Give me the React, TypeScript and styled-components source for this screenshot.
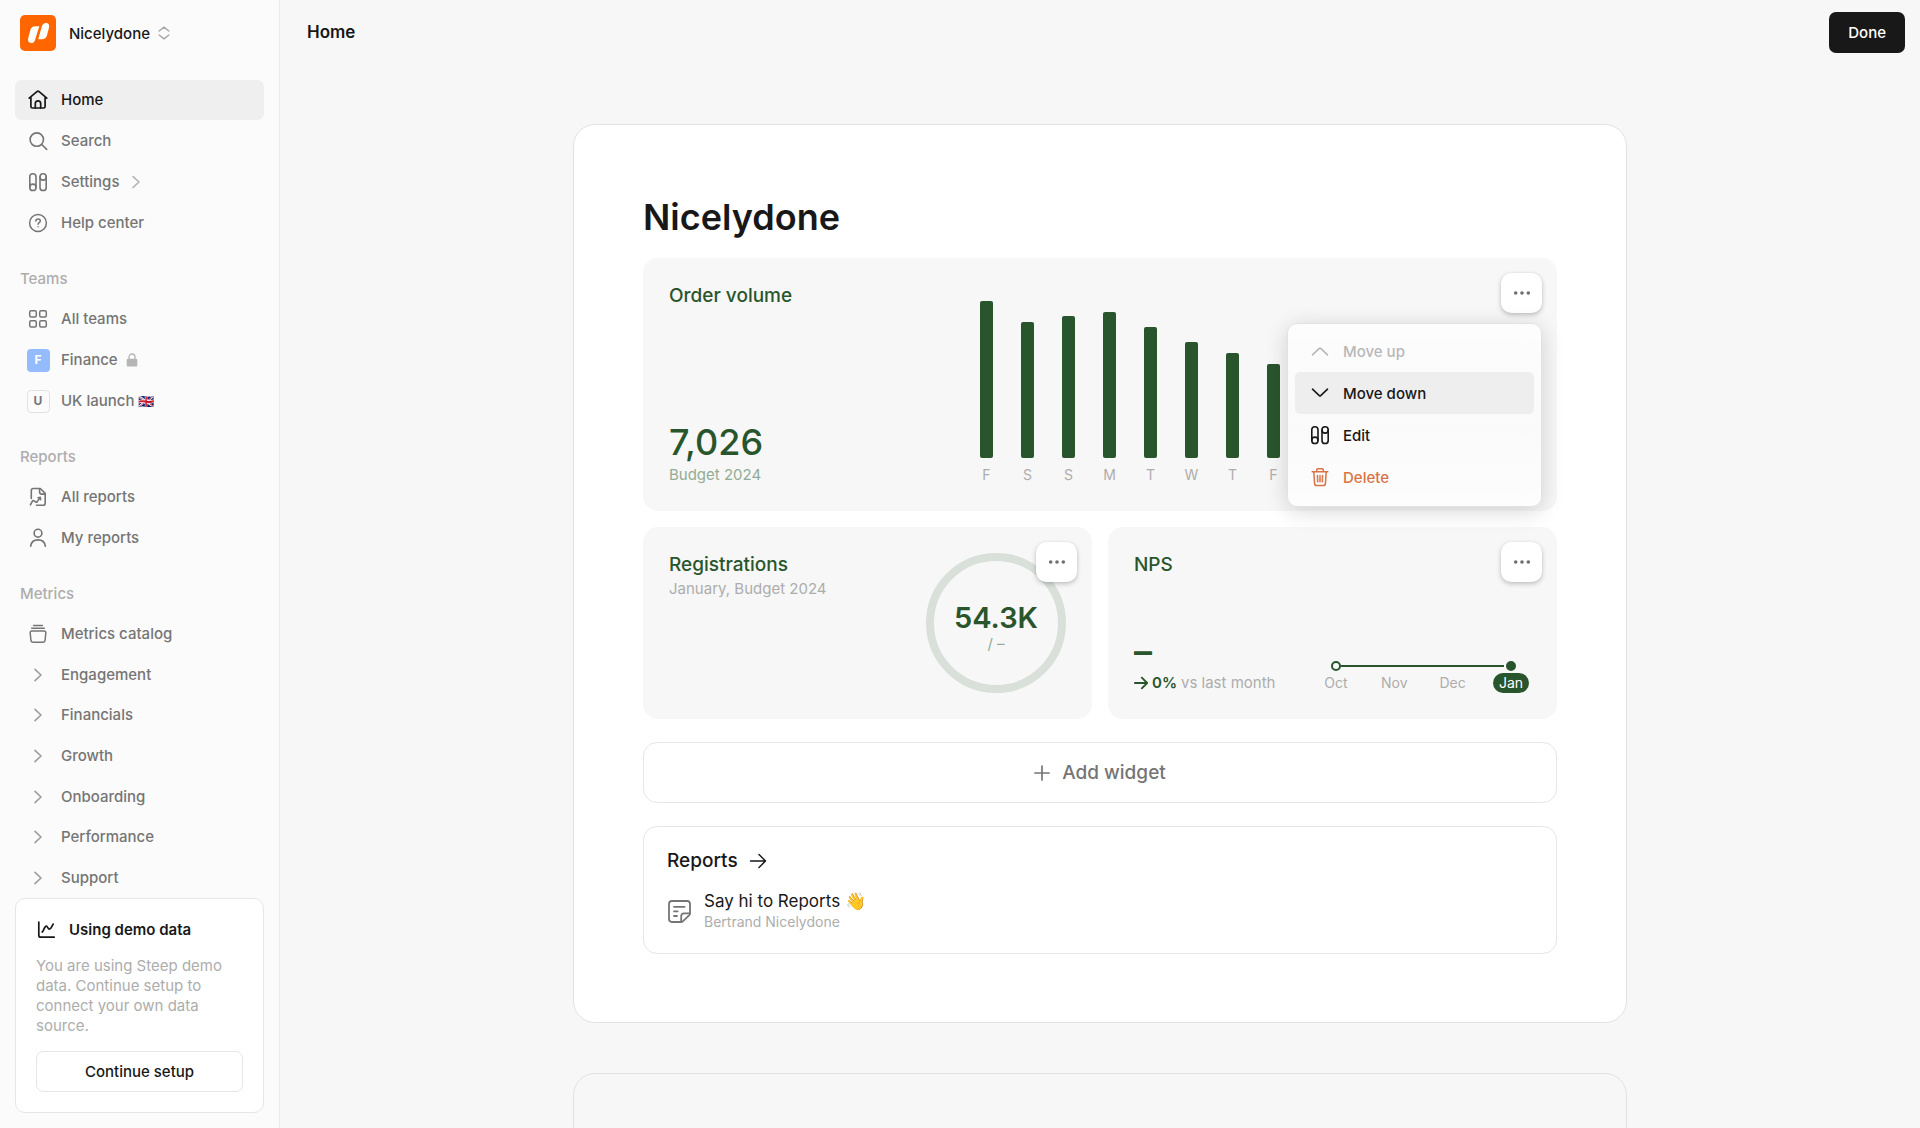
import React from "react";
import styled, { createGlobalStyle, css } from "styled-components";

const color = {
  page: "#f7f7f7",
  side: "#fbfbfb",
  line: "#e6e6e6",
  ink: "#181818",
  body: "#757575",
  mute: "#adadad",
  green: "#29552c",
  softGreen: "#92ac94",
  ring: "#d9e0da",
};

const GlobalStyle = createGlobalStyle`
  *, *::before, *::after { box-sizing: border-box; }
  body { margin: 0; background: ${color.page}; }
  body, button { font-family: Inter, "Liberation Sans", sans-serif; }
  button { cursor: pointer; }
  h1, h2, h3, p, ul { margin: 0; padding: 0; }
  ul { list-style: none; }
  a { color: inherit; text-decoration: none; }
  svg { display: block; flex: none; }
`;

const Shell = styled.div`
  display: grid;
  grid-template-columns: 280px minmax(0, 1fr);
  height: 100vh;
  font-size: 15px;
  line-height: 20px;
  color: ${color.ink};
`;

/* Sidebar */

const Sidebar = styled.aside`
  display: flex;
  flex-direction: column;
  min-height: 0;
  padding: 15px;
  background: ${color.side};
  border-right: 1px solid #ebebeb;
`;

const Workspace = styled.button`
  display: flex;
  align-items: center;
  gap: 13px;
  margin: 0 0 29px 5px;
  padding: 0;
  border: 0;
  background: none;
  color: ${color.ink};
  font-size: 15px;
  font-weight: 500;
`;

const WorkspaceName = styled.span`
  display: flex;
  align-items: center;
  gap: 8px;
`;

const NavScroll = styled.nav`
  display: flex;
  flex-direction: column;
  flex: 1;
  min-height: 0;
  overflow: hidden;
`;

const NavList = styled.ul`
  display: flex;
  flex-direction: column;
  gap: 1px;
  &:last-child {
    flex: 1;
    justify-content: space-between;
    gap: 0;
  }
`;

const NavLink = styled.a<{ $active?: boolean }>`
  display: flex;
  align-items: center;
  gap: 12px;
  height: 40px;
  padding: 0 12px;
  border-radius: 7px;
  font-size: 15px;
  font-weight: ${(p) => (p.$active ? 500 : 450)};
  color: ${(p) => (p.$active ? color.ink : color.body)};
  background: ${(p) => (p.$active ? "#efefef" : "transparent")};
`;

const NavIcon = styled.span<{ $faint?: boolean }>`
  display: flex;
  align-items: center;
  justify-content: center;
  width: 22px;
  color: ${(p) => (p.$faint ? "#9c9c9c" : "inherit")};
`;

const NavText = styled.span`
  display: flex;
  align-items: center;
  gap: 8px;
`;

const Emoji = styled.span`
  font-size: 13px;
`;

const NavHeading = styled.h3`
  padding: 26px 5px 10px;
  font-size: 15px;
  line-height: 20px;
  font-weight: 500;
  color: ${color.mute};
`;

const Badge = styled.span<{ $filled?: boolean }>`
  display: flex;
  align-items: center;
  justify-content: center;
  flex: none;
  width: 23px;
  height: 23px;
  border-radius: 4px;
  font-size: 12px;
  font-weight: 700;
  ${(p) =>
    p.$filled
      ? css`
          background: #94bcfd;
          color: #fff;
        `
      : css`
          border: 1px solid #e2e2e2;
          color: ${color.body};
        `}
`;

const DemoCard = styled.section`
  padding: 20px;
  background: #fff;
  border: 1px solid ${color.line};
  border-radius: 10px;
`;

const DemoTitle = styled.h2`
  display: flex;
  align-items: center;
  gap: 13px;
  line-height: 22px;
  font-size: 15px;
  font-weight: 600;
`;

const DemoText = styled.p`
  margin: 15px 0;
  font-size: 15px;
  color: ${color.mute};
`;

const OutlineButton = styled.button`
  width: 100%;
  height: 41px;
  border: 1px solid ${color.line};
  border-radius: 7px;
  background: #fff;
  color: ${color.ink};
  font-size: 15px;
  font-weight: 500;
`;

/* Main column */

const Main = styled.main`
  min-width: 0;
  overflow-y: auto;
  scrollbar-width: none;
`;

const TopBar = styled.header`
  display: flex;
  align-items: center;
  justify-content: space-between;
  height: 64px;
  padding: 0 15px 0 27px;
`;

const PageName = styled.h2`
  font-size: 17px;
  font-weight: 600;
`;

const DoneButton = styled.button`
  height: 41px;
  padding: 0 19px;
  border: 0;
  border-radius: 7px;
  background: #181818;
  color: #fff;
  font-size: 15px;
  font-weight: 500;
`;

const Content = styled.div`
  display: flex;
  flex-direction: column;
  gap: 50px;
  width: 100%;
  max-width: 1054px;
  margin: 0 auto;
  padding: 60px 0;
`;

const Sheet = styled.section<{ $blank?: boolean }>`
  display: flex;
  flex-direction: column;
  gap: 23px;
  padding: 68px 69px;
  border: 1px solid #e2e2e2;
  border-radius: 22px;
  background: ${(p) => (p.$blank ? "transparent" : "#fff")};
`;

const Title = styled.h1`
  margin-bottom: 17px;
  font-size: 36px;
  line-height: 48px;
  font-weight: 600;
`;

const Widgets = styled.div`
  display: grid;
  grid-template-columns: 1fr 1fr;
  gap: 16px;
`;

const Widget = styled.article<{ $wide?: boolean }>`
  position: relative;
  display: flex;
  justify-content: space-between;
  min-height: ${(p) => (p.$wide ? 253 : 192)}px;
  padding: 26px;
  border-radius: 15px;
  background: ${color.page};
  ${(p) => p.$wide && "grid-column: 1 / -1;"}
`;

const WidgetInfo = styled.div`
  display: flex;
  flex-direction: column;
  justify-content: space-between;
`;

const WidgetTitle = styled.h2`
  margin-bottom: 2px;
  font-size: 19px;
  line-height: 24px;
  font-weight: 500;
  color: ${color.green};
`;

const WidgetNote = styled.p<{ $green?: boolean }>`
  font-size: 15px;
  color: ${(p) => (p.$green ? color.softGreen : color.mute)};
`;

const BigNumber = styled.p`
  font-size: 36px;
  line-height: 46px;
  font-weight: 500;
  color: ${color.green};
`;

const MoreButton = styled.button`
  position: absolute;
  top: 15px;
  right: 15px;
  display: flex;
  align-items: center;
  justify-content: center;
  width: 41px;
  height: 40px;
  padding: 0;
  border: 0;
  border-radius: 10px;
  background: #fff;
  color: #6e6e6e;
  box-shadow: 0 2px 5px rgba(0, 0, 0, 0.22), 0 0 2px rgba(0, 0, 0, 0.08);
`;

const BarChart = styled.div`
  display: grid;
  grid-template-columns: repeat(14, 13px);
  column-gap: 28px;
  align-items: end;
  padding: 10px 5px 0 0;
`;

const BarColumn = styled.div`
  display: flex;
  flex-direction: column;
  align-items: center;
  gap: 7px;
  font-size: 14px;
  color: ${color.mute};
`;

const Bar = styled.div`
  width: 13px;
  border-radius: 2px;
  background: ${color.green};
`;

const Menu = styled.div`
  position: absolute;
  z-index: 2;
  top: 65px;
  right: 15px;
  width: 255px;
  padding: 6px 7px 8px;
  border: 1px solid #e2e2e2;
  border-radius: 10px;
  background: linear-gradient(180deg, #fdfdfd 0%, #f9faf9 55%, #fdfdfd 100%);
  box-shadow: 0 4px 22px rgba(0, 0, 0, 0.16);
`;

const MenuItem = styled.button<{ $tone?: "hover" | "danger" }>`
  display: flex;
  align-items: center;
  gap: 12px;
  width: 100%;
  height: 42px;
  padding: 0 14px;
  border: 0;
  border-radius: 5px;
  background: ${(p) => (p.$tone === "hover" ? "#eeeeee" : "transparent")};
  color: ${(p) => (p.$tone === "danger" ? "#d97345" : color.ink)};
  font-size: 15px;
  font-weight: 450;
  &:disabled {
    color: #b8b8b8;
    cursor: default;
  }
`;

const Ring = styled.div`
  display: flex;
  flex-direction: column;
  align-items: center;
  justify-content: center;
  width: 140px;
  height: 140px;
  padding-top: 9px;
  border: 8px solid ${color.ring};
  border-radius: 50%;
`;

const RingValue = styled.p`
  font-size: 29px;
  line-height: 32px;
  font-weight: 600;
  color: ${color.green};
`;

const NpsValue = styled.p`
  margin-bottom: 4px;
  font-size: 36px;
  line-height: 36px;
  font-weight: 600;
  color: ${color.green};
`;

const Trend = styled.p`
  display: flex;
  align-items: center;
  gap: 4px;
  line-height: 20px;
  color: ${color.mute};
  strong {
    font-weight: 600;
    color: ${color.green};
  }
  svg {
    color: ${color.green};
  }
`;

const Timeline = styled.div`
  display: flex;
  flex-direction: column;
  justify-content: flex-end;
  width: 213px;
  padding-right: 2px;
`;

const Track = styled.div`
  display: flex;
  align-items: center;
  gap: 2px;
  padding: 0 13px 2px;
`;

const Dot = styled.span<{ $open?: boolean }>`
  width: 10px;
  height: 10px;
  border-radius: 50%;
  border: 2px solid ${color.green};
  background: ${(p) => (p.$open ? "#fff" : color.green)};
  margin-right: ${(p) => (p.$open ? "-2px" : 0)};
`;

const TrackLine = styled.span`
  flex: 1;
  height: 2px;
  background: ${color.green};
`;

const Months = styled.div`
  display: flex;
  align-items: center;
  justify-content: space-between;
`;

const Month = styled.span<{ $current?: boolean }>`
  width: 36px;
  border-radius: 10px;
  font-size: 14px;
  line-height: 20px;
  text-align: center;
  color: ${(p) => (p.$current ? "#fff" : color.mute)};
  background: ${(p) => (p.$current ? color.green : "transparent")};
`;

const AddWidget = styled.button`
  display: flex;
  align-items: center;
  justify-content: center;
  gap: 12px;
  height: 61px;
  border: 1px solid ${color.line};
  border-radius: 14px;
  background: #fff;
  color: ${color.body};
  font-size: 19px;
  font-weight: 450;
`;

const ReportsPanel = styled.section`
  padding: 22px 23px 21px;
  border: 1px solid ${color.line};
  border-radius: 14px;
`;

const ReportsTitle = styled.h2`
  font-size: 19px;
  line-height: 24px;
  font-weight: 500;
  a {
    display: inline-flex;
    align-items: center;
    gap: 11px;
  }
`;

const ReportLink = styled.a`
  display: flex;
  align-items: center;
  gap: 12px;
  margin-top: 18px;
  svg {
    color: ${color.body};
  }
`;

const ReportName = styled.p`
  font-size: 17px;
  line-height: 21px;
`;

const ReportAuthor = styled.p`
  font-size: 14px;
  line-height: 20px;
  color: ${color.mute};
`;

/* Icons */

type IconProps = { width?: number; children: React.ReactNode };
const Icon = ({ width = 1.6, children }: IconProps) => (
  <svg
    width="22"
    height="22"
    viewBox="0 0 22 22"
    fill="none"
    stroke="currentColor"
    strokeWidth={width}
    strokeLinecap="round"
    strokeLinejoin="round"
    aria-hidden="true"
  >
    {children}
  </svg>
);

const HomeIcon = () => (
  <Icon width={1.7}>
    <path d="M2.2 9.2 9.9 2.7q1.1-.9 2.2 0l7.7 6.5M3.9 8v9.5q0 1.5 1.5 1.5h11.2q1.5 0 1.5-1.5V8" />
    <path d="M8.3 19v-4.4a2.7 2.7 0 0 1 5.4 0V19" />
  </Icon>
);
const SearchIcon = () => (
  <Icon>
    <circle cx="9.8" cy="9.6" r="6.7" />
    <path d="m14.7 14.5 5 4.9" />
  </Icon>
);
const SlidersIcon = () => (
  <Icon>
    <rect x="2.8" y="2.7" width="6.2" height="16.8" rx="3.1" />
    <path d="M2.8 16.2a3.1 3.1 0 0 1 6.2 0" />
    <rect x="13" y="2.7" width="6.2" height="16.8" rx="3.1" />
    <path d="M13 6a3.1 3.1 0 0 0 6.2 0" />
  </Icon>
);
const HelpIcon = () => (
  <Icon width={1.5}>
    <circle cx="11" cy="11" r="8.4" />
    <path d="M8.8 9.1c.1-1.3 1-2 2.3-2s2.2.8 2.2 1.9c0 1.6-2.2 1.6-2.2 3.2" />
    <path d="M11.1 14.7v.1" />
  </Icon>
);
const GridIcon = () => (
  <Icon width={1.5}>
    <rect x="2.7" y="2.7" width="6.6" height="6.3" rx="1.5" />
    <rect x="12.7" y="2.7" width="6.6" height="6.3" rx="1.5" />
    <rect x="2.7" y="12.8" width="6.6" height="6.3" rx="1.5" />
    <rect x="12.7" y="12.8" width="6.6" height="6.3" rx="1.5" />
  </Icon>
);
const LockIcon = () => (
  <svg width="12" height="14" viewBox="0 0 12 14" aria-hidden="true">
    <path d="M3 6.5V4a3 3 0 0 1 6 0v2.5" fill="none" stroke="#b5b5b5" strokeWidth="1.3" />
    <rect x=".7" y="5.8" width="10.6" height="7.7" rx="1.3" fill="#b5b5b5" />
  </svg>
);
const ReportChartIcon = () => (
  <Icon>
    <path d="M4.3 12.4V4.5q0-2 2-2h7l4.9 4.9v9.8q0 2-2 2H9.5" />
    <path d="M12.6 2.7v3.4q0 2 2 2h3.4" />
    <path d="m3.400 18.800 2-3.600q.7-1.100 1.700-.3l1.400 1q.9.700 1.600-.2l3-4.100M11.100 11.700l2.200-.3.300 2.300" />
  </Icon>
);
const PersonIcon = () => (
  <Icon>
    <circle cx="11" cy="6.2" r="3.9" />
    <path d="M3.7 19.3c.4-4.3 3.2-6.4 7.3-6.4s6.900 2.100 7.300 6.400" />
  </Icon>
);
const CatalogIcon = () => (
  <Icon width={1.5}>
    <path d="M6.600 2.500h8.800M4.700 5.200h12.600" />
    <path d="M5 8h12q2 0 1.800 2l-.7 7q-.2 2.200-2.300 2.200H6.200Q4.100 19.200 3.900 17l-.7-7Q3 8 5 8Z" />
  </Icon>
);
const ChevronRight = () => (
  <Icon>
    <path d="m8 5.300 6 5.700-6 5.700" />
  </Icon>
);
const ChevronSmall = () => (
  <svg width="18" height="14" viewBox="0 0 18 14" fill="none" stroke="#b0b0b0" strokeWidth="1.600" strokeLinecap="round" strokeLinejoin="round" aria-hidden="true">
    <path d="m6 1.500 6 5.500-6 5.500" />
  </svg>
);
const UpDownIcon = () => (
  <svg width="12" height="14" viewBox="0 0 12 14" fill="none" stroke="#a8a8a8" strokeWidth="1.500" strokeLinecap="round" strokeLinejoin="round" aria-hidden="true">
    <path d="M1.200 5 6 1.200 10.800 5M1.200 9 6 12.800 10.800 9" />
  </svg>
);
const LineChartIcon = () => (
  <svg width="20" height="22" viewBox="0 0 20 22" fill="none" stroke="currentColor" strokeWidth="1.700" strokeLinecap="round" strokeLinejoin="round" aria-hidden="true">
    <path d="M2.800 3v13.200q0 2 2 2h13.400" />
    <path d="M6.200 13c1.700-1 2-5.900 4.100-5.900 1.500 0 1.500 3.100 3 3.100 2 0 2.600-3.700 3.900-5" />
  </svg>
);
const ChevronUp = () => (
  <Icon>
    <path d="m3.500 14.800 6.800-6.500q.7-.6 1.400 0l6.800 6.500" />
  </Icon>
);
const ChevronDown = () => (
  <Icon>
    <path d="m3.500 7.200 6.800 6.500q.7.600 1.400 0l6.800-6.500" />
  </Icon>
);
const TrashIcon = () => (
  <Icon width={1.5}>
    <path d="M3.2 5.700h15.600M7.700 5.600V4q0-1.300 1.300-1.300h4q1.300 0 1.300 1.300v1.600" />
    <path d="m4.800 5.900.8 11.700q.1 1.900 2 1.900h6.800q1.900 0 2-1.900l.8-11.700M8.400 9.600l.3 6.200M11 9.600v6.200M13.600 9.600l-.3 6.200" />
  </Icon>
);
const DotsIcon = () => (
  <svg width="18" height="6" viewBox="0 0 18 6" fill="currentColor" aria-hidden="true">
    <circle cx="2.700" cy="3" r="1.800" />
    <circle cx="9" cy="3" r="1.800" />
    <circle cx="15.300" cy="3" r="1.800" />
  </svg>
);
const PlusIcon = () => (
  <svg width="16" height="16" viewBox="0 0 16 16" stroke="currentColor" strokeWidth="1.700" strokeLinecap="round" aria-hidden="true">
    <path d="M1 8h14M8 1v14" />
  </svg>
);
const ArrowIcon = ({ bold }: { bold?: boolean }) => (
  <svg width={bold ? 14 : 18} height={bold ? 14 : 16} viewBox="0 0 17 16" fill="none" stroke="currentColor" strokeWidth={bold ? 2.2 : 1.5} strokeLinecap="round" strokeLinejoin="round" aria-hidden="true">
    <path d="M1 8h15M9.500 1.500 16 8l-6.500 6.500" />
  </svg>
);
const NoteIcon = () => (
  <svg width="25" height="25" viewBox="0 0 25 25" fill="none" stroke="currentColor" strokeWidth="1.800" strokeLinecap="round" strokeLinejoin="round" aria-hidden="true">
    <path d="M23 14.500V4.900q0-2.900-2.900-2.900H4.900Q2 2 2 4.900v15.200Q2 23 4.900 23h9.200q1 0 1.700-.7l6.500-6.200q.7-.7.7-1.600Z" />
    <path d="M14.200 22.700v-5.500q0-2.900 2.900-2.900h5.600M7 7.800h10.600M7 12.400h3.600M7 17h3" />
  </svg>
);
const Logo = () => (
  <svg width="36" height="36" viewBox="0 0 36 36" aria-hidden="true">
    <rect width="36" height="36" rx="5" fill="#ff6600" />
    <path d="M19.300 11.200h-4q-4 0-5 4L8.200 23.300q-1 4.600 3 4.700 3 0 4-3.600Z" fill="#fff" />
    <path d="M18.200 24.300h3.700q4 0 5.100-4l2-7.700q.9-4.400-3-4.600-3.100 0-4.200 3.600Z" fill="#fff" />
  </svg>
);

/* Data */

type NavEntry = {
  label: React.ReactNode;
  icon: React.ReactNode;
  faint?: boolean;
  active?: boolean;
  after?: React.ReactNode;
};

const primary: NavEntry[] = [
  { label: "Home", icon: <HomeIcon />, active: true },
  { label: "Search", icon: <SearchIcon /> },
  { label: "Settings", icon: <SlidersIcon />, after: <ChevronSmall /> },
  { label: "Help center", icon: <HelpIcon /> },
];

const groups: { title: string; items: NavEntry[] }[] = [
  {
    title: "Teams",
    items: [
      { label: "All teams", icon: <GridIcon /> },
      { label: "Finance", icon: <Badge $filled>F</Badge>, after: <LockIcon /> },
      {
        label: (
          <span>
            UK launch <Emoji>🇬🇧</Emoji>
          </span>
        ),
        icon: <Badge>U</Badge>,
      },
    ],
  },
  {
    title: "Reports",
    items: [
      { label: "All reports", icon: <ReportChartIcon /> },
      { label: "My reports", icon: <PersonIcon /> },
    ],
  },
  {
    title: "Metrics",
    items: [
      { label: "Metrics catalog", icon: <CatalogIcon /> },
      ...["Engagement", "Financials", "Growth", "Onboarding", "Performance", "Support"].map(
        (label) => ({ label, icon: <ChevronRight />, faint: true })
      ),
    ],
  },
];

const orders = [
  { day: "F", value: 157 },
  { day: "S", value: 136 },
  { day: "S", value: 142 },
  { day: "M", value: 146 },
  { day: "T", value: 131 },
  { day: "W", value: 116 },
  { day: "T", value: 105 },
  { day: "F", value: 94 },
];

const NavItems = ({ items }: { items: NavEntry[] }) => (
  <NavList>
    {items.map((item, i) => (
      <li key={i}>
        <NavLink href="#" $active={item.active}>
          <NavIcon $faint={item.faint}>{item.icon}</NavIcon>
          <NavText>
            {item.label}
            {item.after}
          </NavText>
        </NavLink>
      </li>
    ))}
  </NavList>
);

const More = () => (
  <MoreButton type="button">
    <DotsIcon />
  </MoreButton>
);

export default function App() {
  return (
    <Shell>
      <GlobalStyle />
      <Sidebar>
        <Workspace type="button">
          <Logo />
          <WorkspaceName>
            Nicelydone
            <UpDownIcon />
          </WorkspaceName>
        </Workspace>
        <NavScroll>
          <NavItems items={primary} />
          {groups.map((group) => (
            <React.Fragment key={group.title}>
              <NavHeading>{group.title}</NavHeading>
              <NavItems items={group.items} />
            </React.Fragment>
          ))}
        </NavScroll>
        <DemoCard>
          <DemoTitle>
            <LineChartIcon />
            Using demo data
          </DemoTitle>
          <DemoText>
            You are using Steep demo data. Continue setup to connect your own data source.
          </DemoText>
          <OutlineButton type="button">Continue setup</OutlineButton>
        </DemoCard>
      </Sidebar>

      <Main>
        <TopBar>
          <PageName>Home</PageName>
          <DoneButton type="button">Done</DoneButton>
        </TopBar>
        <Content>
          <Sheet>
            <div>
              <Title>Nicelydone</Title>
              <Widgets>
                <Widget $wide>
                  <WidgetInfo>
                    <WidgetTitle>Order volume</WidgetTitle>
                    <div>
                      <BigNumber>7,026</BigNumber>
                      <WidgetNote $green>Budget 2024</WidgetNote>
                    </div>
                  </WidgetInfo>
                  <BarChart>
                    {orders.map((order, i) => (
                      <BarColumn key={i}>
                        <Bar style={{ height: order.value }} />
                        {order.day}
                      </BarColumn>
                    ))}
                  </BarChart>
                  <More />
                  <Menu>
                    <MenuItem type="button" disabled>
                      <ChevronUp />
                      Move up
                    </MenuItem>
                    <MenuItem type="button" $tone="hover">
                      <ChevronDown />
                      Move down
                    </MenuItem>
                    <MenuItem type="button">
                      <SlidersIcon />
                      Edit
                    </MenuItem>
                    <MenuItem type="button" $tone="danger">
                      <TrashIcon />
                      Delete
                    </MenuItem>
                  </Menu>
                </Widget>

                <Widget>
                  <div>
                    <WidgetTitle>Registrations</WidgetTitle>
                    <WidgetNote>January, Budget 2024</WidgetNote>
                  </div>
                  <Ring>
                    <RingValue>54.3K</RingValue>
                    <WidgetNote $green>/ –</WidgetNote>
                  </Ring>
                  <More />
                </Widget>

                <Widget>
                  <WidgetInfo>
                    <WidgetTitle>NPS</WidgetTitle>
                    <div>
                      <NpsValue>–</NpsValue>
                      <Trend>
                        <ArrowIcon bold />
                        <strong>0%</strong>
                        vs last month
                      </Trend>
                    </div>
                  </WidgetInfo>
                  <Timeline>
                    <Track>
                      <Dot $open />
                      <TrackLine />
                      <Dot />
                    </Track>
                    <Months>
                      <Month>Oct</Month>
                      <Month>Nov</Month>
                      <Month>Dec</Month>
                      <Month $current>Jan</Month>
                    </Months>
                  </Timeline>
                  <More />
                </Widget>
              </Widgets>
            </div>

            <AddWidget type="button">
              <PlusIcon />
              Add widget
            </AddWidget>

            <ReportsPanel>
              <ReportsTitle>
                <a href="#">
                  Reports
                  <ArrowIcon />
                </a>
              </ReportsTitle>
              <ReportLink href="#">
                <NoteIcon />
                <div>
                  <ReportName>Say hi to Reports 👋</ReportName>
                  <ReportAuthor>Bertrand Nicelydone</ReportAuthor>
                </div>
              </ReportLink>
            </ReportsPanel>
          </Sheet>
          <Sheet $blank />
        </Content>
      </Main>
    </Shell>
  );
}
